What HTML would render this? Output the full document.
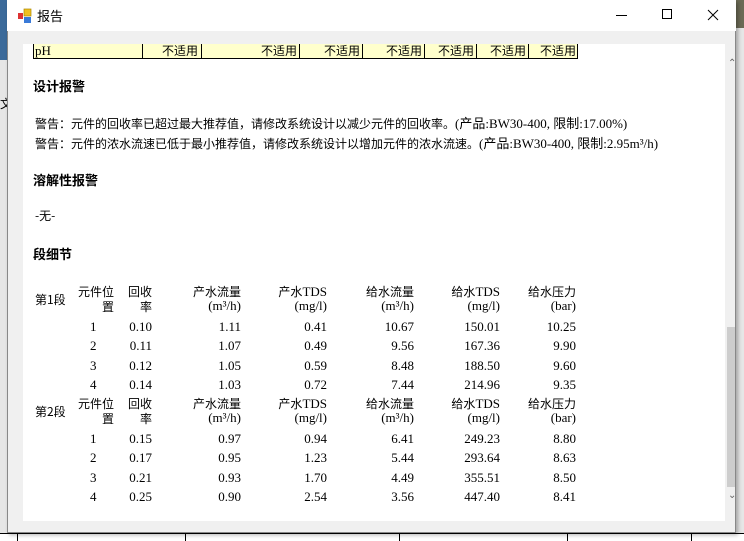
<!DOCTYPE html>
<html><head><meta charset="utf-8"><style>
*{margin:0;padding:0;box-sizing:border-box}
body{width:744px;height:541px;overflow:hidden;background:#e6e6e6;position:relative;font-family:"Liberation Serif","Noto Sans CJK SC",serif;font-size:13px;color:#000}
.a{position:absolute;white-space:nowrap}
.r{text-align:right}
.cjk{font-family:"Noto Sans CJK SC","WenQuanYi Zen Hei",sans-serif}
.b{font-weight:bold}
</style></head><body>
<div class="a" style="left:0;top:0;width:7px;height:60px;background:#3b6a9a"></div>
<div class="a" style="left:736px;top:0;width:8px;height:28px;background:#6b6a55"></div>
<div class="a cjk" style="left:0;top:95px;font-size:12px">文</div>
<div class="a" style="left:0;top:533px;width:744px;height:8px;background:#fff;border-top:1px solid #000"></div>
<div class="a" style="left:17px;top:533px;width:1px;height:8px;background:#000"></div>
<div class="a" style="left:185px;top:533px;width:1px;height:8px;background:#000"></div>
<div class="a" style="left:399px;top:533px;width:1px;height:8px;background:#000"></div>
<div class="a" style="left:567px;top:533px;width:1px;height:8px;background:#000"></div>
<div class="a" style="left:691px;top:533px;width:1px;height:8px;background:#000"></div>
<!-- dialog -->
<div class="a" style="left:7px;top:0;width:729px;height:533px;background:#f0f0f0;border:1px solid #888;box-shadow:2px 2px 4px rgba(0,0,0,.3)"></div>
<div class="a" style="left:7px;top:0;width:729px;height:31px;background:#fff"></div>
<svg class="a" style="left:17px;top:8px" width="16" height="16"><rect x="1" y="5" width="5" height="6" fill="#d33"/><rect x="7" y="1" width="7" height="7" fill="#f0c020" stroke="#a80" stroke-width=".7"/><rect x="7" y="9" width="7" height="6" fill="#3a7ad8"/></svg>
<div class="a cjk" style="left:37px;top:6px;font-size:13px">报告</div>
<div class="a" style="left:616px;top:15px;width:11px;height:1px;background:#000"></div>
<div class="a" style="left:662px;top:9px;width:10px;height:10px;border:1px solid #000"></div>
<svg class="a" style="left:707px;top:9px" width="12" height="12"><path d="M1 1L11 11M11 1L1 11" stroke="#000" stroke-width="1"/></svg>
<div class="a" style="left:23px;top:44px;width:702px;height:477px;background:#fff"></div>
<div class="a" style="left:727px;top:327px;width:8px;height:160px;background:#cdcdcd"></div>
<div class="a" style="left:728px;top:58px;font-size:10px;color:#666">⌃</div>
<div class="a" style="left:728px;top:490px;font-size:10px;color:#666">⌄</div>
<!-- pH row -->
<div class="a" style="left:33px;top:44px;width:545px;height:15px;background:#ffffcc;border:1px solid #000;border-top:none"></div>
<div class="a" style="left:35px;top:43px">pH</div>
<div class="a cjk" style="left:0;top:42px;font-size:12px">
<span class="a r" style="left:160px;width:38px">不适用</span>
<span class="a r" style="left:260px;width:37px">不适用</span>
<span class="a r" style="left:320px;width:40px">不适用</span>
<span class="a r" style="left:380px;width:42px">不适用</span>
<span class="a r" style="left:430px;width:44px">不适用</span>
<span class="a r" style="left:480px;width:46px">不适用</span>
<span class="a r" style="left:530px;width:46px">不适用</span>
</div>
<div class="a" style="left:142px;top:44px;width:1px;height:15px;background:#000"></div>
<div class="a" style="left:201px;top:44px;width:1px;height:15px;background:#000"></div>
<div class="a" style="left:299px;top:44px;width:1px;height:15px;background:#000"></div>
<div class="a" style="left:362px;top:44px;width:1px;height:15px;background:#000"></div>
<div class="a" style="left:424px;top:44px;width:1px;height:15px;background:#000"></div>
<div class="a" style="left:476px;top:44px;width:1px;height:15px;background:#000"></div>
<div class="a" style="left:528px;top:44px;width:1px;height:15px;background:#000"></div>
<div class="a cjk b" style="left:33px;top:76px">设计报警</div>
<div class="a cjk" style="left:35px;top:113px;font-size:12px">警告：元件的回收率已超过最大推荐值，请修改系统设计以减少元件的回收率。<span style="font-family:'Liberation Serif',serif;font-size:13px">(产品:BW30-400, 限制:17.00%)</span></div>
<div class="a cjk" style="left:35px;top:133px;font-size:12px">警告：元件的浓水流速已低于最小推荐值，请修改系统设计以增加元件的浓水流速。<span style="font-family:'Liberation Serif',serif;font-size:13px">(产品:BW30-400, 限制:2.95m³/h)</span></div>
<div class="a cjk b" style="left:33px;top:170px">溶解性报警</div>
<div class="a cjk" style="left:35px;top:207px;font-size:12px">-无-</div>
<div class="a cjk b" style="left:33px;top:244px">段细节</div>
<div id="t"></div>
<script>
var R=[114,152,241,327,414,500,576];
var H1=["元件位","回收","产水流量","产水TDS","给水流量","给水TDS","给水压力"];
var H2=["置","率","(m³/h)","(mg/l)","(m³/h)","(mg/l)","(bar)"];
function st(y,name,rows){
 var h='<div class="a cjk" style="left:35px;top:'+(y+8)+'px;font-size:12px">'+name+'</div>';
 for(var i=0;i<7;i++){
  h+='<div class="a r cjk" style="left:'+(R[i]-80)+'px;width:80px;top:'+y+'px;font-size:12px">'+H1[i].replace(/(TDS)/,'<span style="font-family:Liberation Serif,serif;font-size:13px">$1</span>')+'</div>';
  h+='<div class="a r '+(i<2?'cjk':'')+'" style="left:'+(R[i]-80)+'px;width:80px;top:'+(y+15)+'px;font-size:'+(i<2?12:13)+'px">'+H2[i]+'</div>';
 }
 for(var j=0;j<4;j++){
  var yy=y+36+j*19.3;
  h+='<div class="a" style="left:90px;top:'+yy+'px">'+(j+1)+'</div>';
  for(var k=0;k<6;k++) h+='<div class="a r" style="left:'+(R[k+1]-80)+'px;width:80px;top:'+yy+'px">'+rows[j][k]+'</div>';
 }
 return h;
}
document.getElementById('t').innerHTML=
st(283,'第1段',[["0.10","1.11","0.41","10.67","150.01","10.25"],["0.11","1.07","0.49","9.56","167.36","9.90"],["0.12","1.05","0.59","8.48","188.50","9.60"],["0.14","1.03","0.72","7.44","214.96","9.35"]])+
st(395,'第2段',[["0.15","0.97","0.94","6.41","249.23","8.80"],["0.17","0.95","1.23","5.44","293.64","8.63"],["0.21","0.93","1.70","4.49","355.51","8.50"],["0.25","0.90","2.54","3.56","447.40","8.41"]]);
</script>
</body></html>
